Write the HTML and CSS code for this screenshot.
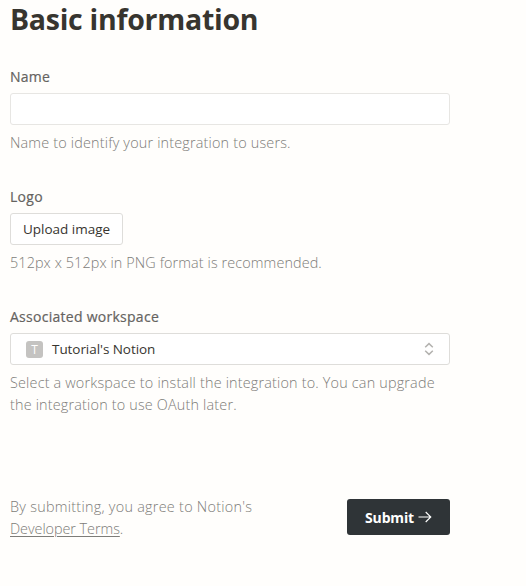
FILE: index.html
```html
<!DOCTYPE html>
<html lang="en">
<head>
<meta charset="utf-8">
<title>Basic information</title>
<link rel="stylesheet" href="styles.css">
</head>
<body>
<form class="form">
  <h1 class="title">Basic information</h1>
  <section class="field">
    <label class="label" for="name">Name</label>
    <input class="box input" id="name" type="text">
    <p class="help">Name to identify your integration to users.</p>
  </section>
  <section class="field">
    <div class="label">Logo</div>
    <button class="box upload" type="button">Upload image</button>
    <p class="help help-format">512px x 512px in PNG format is recommended.</p>
  </section>
  <section class="field">
    <div class="label">Associated workspace</div>
    <div class="box select">
      <span class="avatar">T</span>
      <span class="workspace">Tutorial's Notion</span>
      <svg class="chevrons" width="10" height="14" viewBox="0 0 10 14"><path d="M1.200 5.200 5 1.600l3.800 3.600M1.200 8.800 5 12.400l3.800-3.600"/></svg>
    </div>
    <p class="help">Select a workspace to install the integration to. You can upgrade<br>the integration to use OAuth later.</p>
  </section>
  <footer class="footer">
    <p class="help terms">By submitting, you agree to Notion's<br><a class="link">Developer Terms</a>.</p>
    <button class="submit" type="button"><span>Submit</span><svg class="arrow" width="14" height="12" viewBox="0 0 14 12"><path d="M.5 6h12M7.700 1l5.100 5-5.100 5"/></svg></button>
  </footer>
</form>
</body>
</html>
```
FILE: styles.css
```css
* { box-sizing: border-box; }
body {
  margin: 0;
  background: #fffefc;
  font-family: "Open Sans", "Noto Sans", sans-serif;
  color: #37352f;
}
.form { width: 440px; margin-left: 10px; }
.title {
  margin: 0 0 28px;
  height: 39px;
  line-height: 38px;
  font-size: 28.5px;
  font-weight: 700;
  letter-spacing: -0.28px;
  white-space: nowrap;
}
.field { margin-bottom: 33px; }
.label {
  display: block;
  height: 20px;
  margin-bottom: 6px;
  line-height: 20px;
  font-size: 14px;
  font-weight: 500;
  letter-spacing: 0.27px;
  color: #65635f;
  -webkit-text-stroke: 0.2px #65635f;
}
.box {
  display: flex;
  align-items: center;
  height: 32px;
  background: #fff;
  border: 1px solid #deddda;
  border-radius: 3px;
  font-family: inherit;
  font-size: 13.5px;
  color: #37352f;
}
.input { width: 100%; border-color: #e7e6e3; }
.upload { width: 113px; padding: 0; justify-content: center; white-space: nowrap; }
.select { padding: 0 15px; }
.workspace { letter-spacing: -0.06px; }
.avatar {
  width: 17px;
  height: 17px;
  margin-right: 9px;
  border-radius: 3px;
  background: #c4c3c1;
  color: #fff;
  font-size: 12px;
  line-height: 17px;
  text-align: center;
}
.chevrons { margin-left: auto; fill: none; stroke: #b3b2af; stroke-width: 1.5; }
.help {
  margin: 7px 0 0;
  font-size: 14.4px;
  line-height: 22px;
  font-weight: 300;
  letter-spacing: 0.18px;
  color: #7d7c78;
  white-space: nowrap;
}
.help-format { letter-spacing: 0.1px; }
.footer {
  display: flex;
  justify-content: space-between;
  align-items: flex-start;
  margin-top: 80px;
}
.terms { margin: 0; letter-spacing: 0.27px; }
.link { letter-spacing: -0.05px; text-decoration: underline; text-underline-offset: 2px; }
.submit {
  display: flex;
  align-items: center;
  justify-content: center;
  gap: 4px;
  width: 103px;
  height: 36px;
  margin-top: 3px;
  padding: 0;
  border: 0;
  border-radius: 3px;
  background: #2f3437;
  color: #fff;
  font-family: inherit;
  font-size: 14px;
  font-weight: 700;
  letter-spacing: -0.15px;
}
.arrow { fill: none; stroke: #fff; stroke-width: 1.1; }
```
